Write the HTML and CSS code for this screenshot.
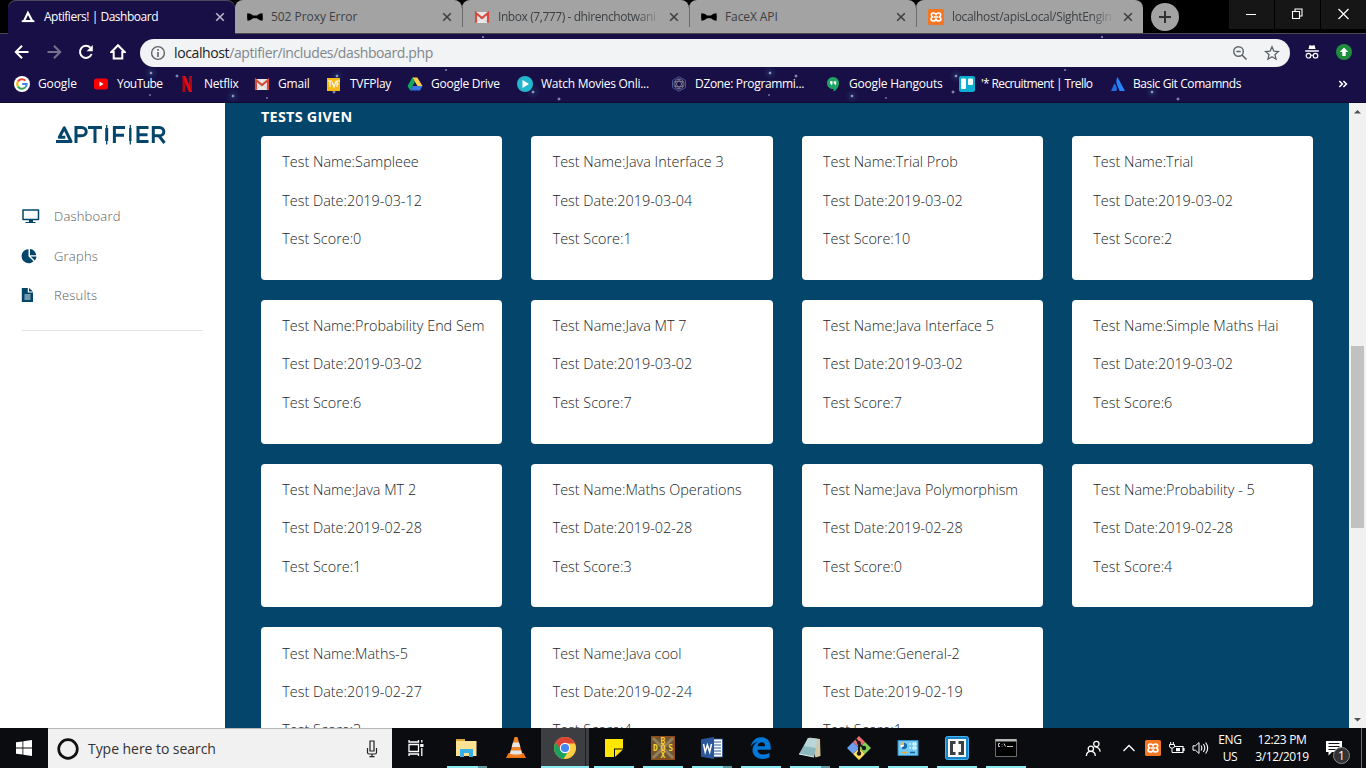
FILE: index.html
```html
<!DOCTYPE html>
<html lang="en">
<head>
<meta charset="utf-8">
<title>Aptifiers! | Dashboard</title>
<link rel="stylesheet" href="styles.css">
</head>
<body>
<svg class="defs" width="0" height="0">
  <defs>
    <symbol id="close" viewBox="0 0 10 10"><path d="M1.2 1.2l7.6 7.6M8.8 1.2L1.2 8.8" stroke="currentColor" stroke-width="1.6" fill="none"/></symbol>
    <symbol id="bow" viewBox="0 0 16 16"><path d="M.3 4.3c2.500 0 4 .8 5.700 2.100h4C11.700 5.100 13.200 4.300 15.500 4.300c.4 2.500.4 5 0 7.500-2.300 0-3.800-1-5.500-2.500H6c-1.700 1.500-3.200 2.500-5.500 2.500C0 9.300 0 6.800.3 4.300z"/></symbol>
    <symbol id="gmail" viewBox="0 0 16 16"><path d="M1.500 3h13v11h-13z" fill="#e8e8e8"/><path d="M3 13l5-5 5 5" fill="none" stroke="#c8c8c8" stroke-width=".7"/><path d="M2 13.800V4l6 5 6-5v9.800" fill="none" stroke="#d54b3d" stroke-width="2.200"/></symbol>
    <symbol id="xampp" viewBox="0 0 16 16"><rect width="16" height="16" rx="1.500" fill="#f37623"/><path d="M8 5.500Q7.300 4 5.200 4 3.200 4 3.400 6q.1 1.700 1.400 2-1.700.4-1.700 2.100 0 1.900 2 1.900 2.900 0 2.900-2.500 0 2.500 2.900 2.500 2 0 2-1.900 0-1.700-1.700-2.100 1.300-.3 1.400-2 .2-2-1.800-2Q8.700 4 8 5.500zM5.500 8h5" fill="none" stroke="#fff" stroke-width="1.700"/></symbol>
  </defs>
</svg>
<header class="chrome">
  <div class="tabs">
    <div class="tab active"><svg class="fav" viewBox="0 0 16 16"><path d="M7.900 3.800L12.300 12H4z" fill="none" stroke="#fff" stroke-width="2.100"/><path d="M1.700 12.200h12.700" stroke="#fff" stroke-width="1.800"/></svg><span class="title t1">Aptifiers! | Dashboard</span><svg class="x"><use href="#close"/></svg></div>
    <div class="tab"><svg class="fav"><use href="#bow"/></svg><span class="title t2">502 Proxy Error</span><svg class="x"><use href="#close"/></svg></div>
    <div class="tab div"><svg class="fav"><use href="#gmail"/></svg><span class="title fade t3">Inbox (7,777) - dhirenchotwani</span><svg class="x"><use href="#close"/></svg></div>
    <div class="tab div"><svg class="fav"><use href="#bow"/></svg><span class="title t4">FaceX API</span><svg class="x"><use href="#close"/></svg></div>
    <div class="tab div"><svg class="fav"><use href="#xampp"/></svg><span class="title fade t5">localhost/apisLocal/SightEngin</span><svg class="x"><use href="#close"/></svg></div>
    <svg class="new" viewBox="0 0 28 28"><circle cx="14" cy="14" r="14" fill="#a3a3a3"/><path d="M14 8v12M8 14h12" stroke="#333" stroke-width="2"/></svg>
    <div class="controls">
      <svg viewBox="0 0 45 29"><path d="M17 14.500h10" stroke="#fff"/></svg>
      <svg viewBox="0 0 45 29"><path d="M17.500 11.500h7v7h-7zM20 11.500v-2.500h7v7h-2.500" fill="none" stroke="#fff" stroke-width="1.100"/></svg>
      <svg viewBox="0 0 45 29"><path d="M17.500 9l10 10M27.500 9l-10 10" stroke="#fff" stroke-width="1.200"/></svg>
    </div>
  </div>
  <div class="toolbar">
    <svg class="nav" viewBox="0 0 16 16"><path d="M14.500 8H2.300M8 1.800L1.800 8 8 14.200" stroke="#fff" stroke-width="2" fill="none"/></svg>
    <svg class="nav" viewBox="0 0 16 16"><path d="M1.500 8h12.200M8 1.800L14.200 8 8 14.200" stroke="#77718f" stroke-width="2" fill="none"/></svg>
    <svg class="nav" viewBox="0 0 16 16"><path d="M13.600 10a6 6 0 1 1-1.200-6.200" stroke="#fff" stroke-width="2" fill="none"/><path d="M14.800 1v6.200H8.600z" fill="#fff"/></svg>
    <svg class="nav" viewBox="0 0 16 16"><path d="M8 1.200L1.500 8h2.200v6.500h8.600V8h2.200z" stroke="#fff" stroke-width="2" fill="none"/></svg>
    <div class="omnibox">
      <svg class="info" viewBox="0 0 16 16"><circle cx="8" cy="8" r="6.400" fill="none" stroke="#5f6368" stroke-width="1.400"/><path d="M8 7v5M8 4v1.700" stroke="#5f6368" stroke-width="1.600"/></svg>
      <span class="url">localhost<span>/aptifier/includes/dashboard.php</span></span>
      <svg class="zoom" viewBox="0 0 16 16"><circle cx="6.500" cy="6.500" r="4.800" fill="none" stroke="#5f6368" stroke-width="1.400"/><path d="M4.300 6.500h4.400M10 10l4.500 4.500" stroke="#5f6368" stroke-width="1.600"/></svg>
      <svg class="star" viewBox="0 0 16 16"><path d="M8 1.800l1.800 4.300 4.700.4L11 9.600l1 4.600-4-2.500-4 2.500 1-4.600L1.500 6.500l4.700-.4z" fill="none" stroke="#5f6368" stroke-width="1.300"/></svg>
    </div>
    <svg class="ext" viewBox="0 0 16 16"><path d="M4.500 5l1-4L8 1.800 10.500 1l1 4zM1.200 6.300h13.600v1.400H1.200z" fill="#fff"/><path d="M7 11.500q1-1 2 0" stroke="#fff" fill="none"/><circle cx="4.500" cy="11.700" r="2.300" stroke="#fff" fill="none" stroke-width="1.200"/><circle cx="11.500" cy="11.700" r="2.300" stroke="#fff" fill="none" stroke-width="1.200"/></svg>
    <svg class="ext upd" viewBox="0 0 16 16"><circle cx="8" cy="8" r="8" fill="#1e8e3e"/><path d="M8 3.500L3.800 8h2.500v4h3.400V8h2.500z" fill="#fff"/></svg>
  </div>
  <nav class="bookmarks">
    <span class="bm b1"><svg viewBox="0 0 16 16"><circle cx="8" cy="8" r="8" fill="#fff"/><g fill="none" stroke-width="2"><path d="M4 5.400A4.800 4.800 0 0 1 11.400 4.600" stroke="#ea4335"/><path d="M4 5.400a4.800 4.800 0 0 0 0 5.200" stroke="#fbbc05"/><path d="M4 10.600a4.800 4.800 0 0 0 7.300.8" stroke="#34a853"/><path d="M11.300 11.400A4.800 4.800 0 0 0 12.700 8H8.200" stroke="#4285f4"/></g></svg><b>Google</b></span>
    <span class="bm b2"><svg viewBox="0 0 16 16"><rect x="1" y="2.500" width="14" height="11" rx="2.500" fill="#f00"/><path d="M6.500 5.500v5l4-2.500z" fill="#fff"/></svg><b>YouTube</b></span>
    <span class="bm b3"><svg viewBox="0 0 16 16"><path d="M2.500 0h3v16h-3zM9 0h3v16H9z" fill="#b1060f"/><path d="M2.500 0h3L12 16H9z" fill="#e50914"/></svg><b>Netflix</b></span>
    <span class="bm b4"><svg><use href="#gmail"/></svg><b>Gmail</b></span>
    <span class="bm b5"><svg viewBox="0 0 16 16"><rect x="1" y="2" width="13" height="13" fill="#f9b916"/><path d="M2 5h4M4 5v6M6 6l2 5 2-6M11 11V5h3M11 8h2" stroke="#fff" fill="none" stroke-width="1.100"/></svg><b>TVFPlay</b></span>
    <span class="bm b6"><svg viewBox="0 0 16 16"><path d="M5.300 1.500h5L15.500 10h-5z" fill="#ffcf48"/><path d="M5.300 1.500L.6 10l2.500 4.500L7.800 6z" fill="#11a861"/><path d="M5.600 10h9.900L13 14.500H3.100z" fill="#3777e3"/></svg><b>Google Drive</b></span>
    <span class="bm b7"><svg viewBox="0 0 16 16"><circle cx="8" cy="8" r="8" fill="#23b7ce"/><path d="M5.500 4v8L12 8z" fill="#fff"/></svg><b>Watch Movies Onli...</b></span>
    <span class="bm b8"><svg viewBox="0 0 16 16"><path d="M8 .7l6.500 3.700v7.200L8 15.300l-6.500-3.700V4.400z" fill="none" stroke="#4b5596"/><g fill="none" stroke="#7d7c8c" stroke-width=".9"><circle cx="8" cy="8" r="5"/><path d="M8 3L4 10.500h8zM8 13L4 5.500h8z"/></g></svg><b>DZone: Programmi...</b></span>
    <span class="bm b9"><svg viewBox="0 0 16 16"><path d="M8 1a6 6 0 0 0-6 6.200c0 3.500 3 5.800 6.500 5.800v2.500C11.500 14 14 10.800 14 7.200A6 6 0 0 0 8 1z" fill="#1fa463"/><path d="M5 5.300h2.500V8L6.300 9.500 6 7.800H5zM8.700 5.300h2.500V8L10 9.500l-.3-1.700h-1z" fill="#fff"/></svg><b>Google Hangouts</b></span>
    <span class="bm b10"><svg viewBox="0 0 16 16"><rect width="16" height="16" rx="2" fill="#09aed0"/><rect x="2" y="2.500" width="5" height="10.500" rx="1" fill="#fff"/><rect x="9" y="2.500" width="5" height="6.500" rx="1" fill="#fff"/></svg><b>'* Recruitment | Trello</b></span>
    <span class="bm b11"><svg viewBox="0 0 16 16"><path d="M4.300 7.500L1 15h5.500c1-2.500.2-5.700-2.200-7.500z" fill="#1f6de0"/><path d="M7.500 1C5.300 5 6.500 8 9.700 15H15z" fill="#2684ff"/></svg><b>Basic Git Comamnds</b></span>
    <svg class="more" viewBox="0 0 10 10"><path d="M1.300 2L4.300 5l-3 3M5.400 2l3 3-3 3" fill="none" stroke="#fff" stroke-width="1.600"/></svg>
  </nav>
</header>

<main class="page">
  <aside class="sidebar">
    <svg class="logo" viewBox="0 0 112 20"><g fill="none" stroke="#04466b" stroke-width="3"><path d="M1 16.500h15L9.300 2.800 4.300 12.300h6" stroke-linejoin="round"/><path d="M21 18V2.500h5.500c6.300 0 6.300 8.300 0 8.300H21M33 2.500h14M40 2.500V18M59.400 18V2.500H70M59.400 10.300H69M93.500 2.500H83v14h10.500M83 9.800h9.500M98.300 18V2.500h6c6 0 6 8.300 0 8.300h-6M104 10.800l5.500 7.200"/></g><g fill="none" stroke="#04466b"><path d="M51.700 3v13" stroke-width="3"/><path d="M75.300 3v13" stroke-width="2.400"/><path d="M51.700 0v3M51.700 16v3.500M75.300 0v3M75.300 16v3.500" stroke-width="1.300"/></g></svg>
    <ul class="menu">
      <li><svg viewBox="0 0 20 16"><path d="M2 2h15.500v9.500H2z" fill="none" stroke="#04466b" stroke-width="1.500" stroke-linejoin="round"/><path d="M8 12h4v2h2.500v1h-10v-1H8z" fill="#04466b"/></svg>Dashboard</li>
      <li><svg viewBox="0 0 20 16"><path d="M7.500 1.200v7l5 5A7 7 0 1 1 7.500 1.200z" fill="#04466b"/><path d="M9 1a6.700 6.700 0 0 1 6.200 6.300H9zM9.700 8.600h5.800a7 7 0 0 1-1.800 4z" fill="#04466b"/></svg>Graphs</li>
      <li><svg viewBox="0 0 20 16"><path d="M.8 1h6v4.500H12V15H.8zM8 1l4 3.500H8z" fill="#04466b"/><path d="M3.500 8h6M3.500 10h6M3.500 12h6" stroke="#fff" stroke-width=".9"/></svg>Results</li>
    </ul>
  </aside>
  <section class="content">
    <h1>TESTS GIVEN</h1>
    <div class="cards">
      <article class="card"><p>Test Name:Sampleee</p><p>Test Date:2019-03-12</p><p>Test Score:0</p></article>
      <article class="card"><p>Test Name:Java Interface 3</p><p>Test Date:2019-03-04</p><p>Test Score:1</p></article>
      <article class="card"><p>Test Name:Trial Prob</p><p>Test Date:2019-03-02</p><p>Test Score:10</p></article>
      <article class="card"><p>Test Name:Trial</p><p>Test Date:2019-03-02</p><p>Test Score:2</p></article>
      <article class="card"><p>Test Name:Probability End Sem</p><p>Test Date:2019-03-02</p><p>Test Score:6</p></article>
      <article class="card"><p>Test Name:Java MT 7</p><p>Test Date:2019-03-02</p><p>Test Score:7</p></article>
      <article class="card"><p>Test Name:Java Interface 5</p><p>Test Date:2019-03-02</p><p>Test Score:7</p></article>
      <article class="card"><p>Test Name:Simple Maths Hai</p><p>Test Date:2019-03-02</p><p>Test Score:6</p></article>
      <article class="card"><p>Test Name:Java MT 2</p><p>Test Date:2019-02-28</p><p>Test Score:1</p></article>
      <article class="card"><p>Test Name:Maths Operations</p><p>Test Date:2019-02-28</p><p>Test Score:3</p></article>
      <article class="card"><p>Test Name:Java Polymorphism</p><p>Test Date:2019-02-28</p><p>Test Score:0</p></article>
      <article class="card"><p>Test Name:Probability - 5</p><p>Test Date:2019-02-28</p><p>Test Score:4</p></article>
      <article class="card"><p>Test Name:Maths-5</p><p>Test Date:2019-02-27</p><p>Test Score:3</p></article>
      <article class="card"><p>Test Name:Java cool</p><p>Test Date:2019-02-24</p><p>Test Score:4</p></article>
      <article class="card"><p>Test Name:General-2</p><p>Test Date:2019-02-19</p><p>Test Score:1</p></article>
    </div>
  </section>
  <div class="scrollbar">
    <svg viewBox="0 0 17 17"><path d="M5 10.500L8.500 7l3.500 3.500z" fill="#505050"/></svg>
    <div class="thumb"></div>
    <svg viewBox="0 0 17 17"><path d="M5 7l3.500 3.500L12 7z" fill="#505050"/></svg>
  </div>
</main>

<footer class="taskbar">
  <div class="start"><svg viewBox="0 0 16 16"><path d="M0 2.300L6.500 1.400v6.200H0zM7.300 1.300L16 0v7.600H7.300zM0 8.400h6.500v6.200L0 13.700zM7.300 8.400H16V16l-8.700-1.300z" fill="#fff"/></svg></div>
  <div class="search">
    <svg class="ring" viewBox="0 0 24 24"><circle cx="12" cy="12" r="9.300" fill="none" stroke="#111" stroke-width="2.700"/></svg>
    <span>Type here to search</span>
    <svg class="mic" viewBox="0 0 12 18"><path d="M4 1h4v10H4zM1.500 8v4.500q0 1.500 1.500 1.500h6q1.500 0 1.500-1.500V8M6 14v3M3.500 16.700h5" fill="none" stroke="#222" stroke-width="1.200"/></svg>
  </div>
  <div class="view"><svg viewBox="0 0 18 18"><path d="M2 5.500h9.500v7H2zM2 1v2h9.500V1M2 17v-2h9.500v2M14.800 1v2.500M14.800 9v8" fill="none" stroke="#fff" stroke-width="1.300"/><path d="M13.200 5h3.300v3h-3.300z" fill="#fff"/></svg></div>
  <div class="apps">
    <div class="app on stack"><svg viewBox="0 0 24 24"><path d="M1 3h8l1 2h11.500v15H1z" fill="#fde293"/><path d="M1 3h9v2H1z" fill="#d9a937"/><path d="M5 21v-8h13v8h-4v-4H9v4z" fill="#39b0e5"/></svg></div>
    <div class="app"><svg viewBox="0 0 24 24"><path d="M4.500 17h15l2.500 5H2z" fill="#ee7313"/><path d="M10.500 1h3l5 18c-3 2-9 2-13 0z" fill="#f18328"/><path d="M9 6.500h6l1.400 4.500H7.700zM6.800 14.500h10.500l.7 3c-3 1.300-9 1.300-12 0z" fill="#e6e6e6"/></svg></div>
    <div class="app on current"><svg viewBox="0 0 24 24"><circle cx="12" cy="12" r="11" fill="#ffcd40"/><path d="M2.500 6.500a11 11 0 0 1 19.500 1H12l-5 7z" fill="#dc4437"/><path d="M2.500 6.500a11 11 0 0 0 8 16.400l5-8.200-7.500 0z" fill="#1aa15f"/><circle cx="12" cy="12" r="5.200" fill="#fff"/><circle cx="12" cy="12" r="4.100" fill="#4587f3"/></svg></div>
    <div class="app on"><svg viewBox="0 0 24 24"><path d="M3 3h18v9.500h-9V21H3z" fill="#ffe500"/><path d="M13 21v-7.500h8z" fill="#ffe500"/></svg></div>
    <div class="app on"><svg viewBox="0 0 24 24"><path d="M.7.700h22.600v22.600H.7z" fill="#6e5636" stroke="#8f4b18" stroke-width="1.400"/><path d="M2 2l20 20M22 2L2 22" stroke="#94815c" stroke-width="3"/><g class="dos"><text x="12" y="7.500">B</text><text x="12" y="15" textLength="20">DOS</text><text x="12" y="22.300">X</text></g></svg></div>
    <div class="app on stack"><svg viewBox="0 0 24 24"><path d="M12 3h10.500v18H12z" fill="#fff" stroke="#2b579a" stroke-width=".8"/><path d="M14 6h7M14 9h7M14 12h7M14 15h7M14 18h7" stroke="#2b579a"/><path d="M1 3.200L14 1v22L1 20.800z" fill="#2b579a"/><path d="M3.500 8l1.700 8L7.400 9l2.300 7L11.500 8" fill="none" stroke="#fff" stroke-width="1.500"/></svg></div>
    <div class="app on"><svg viewBox="0 0 24 24"><path d="M1.700 10.700C3 4.500 7 1.200 12.200 1.200c6.300 0 9.500 4.800 9.500 10v2.600H8.500c.3 5.500 7.500 6 12 3v4.400c-8.500 4.300-17 .5-17-6.900 0-4 2-6.800 5.500-8.300-3 .1-5.500 2-7.300 4.700zM8.600 10.200h7.500c0-5.300-7-5-7.500 0z" fill="#0078d7"/></svg></div>
    <div class="app on stack"><svg viewBox="0 0 24 24"><path d="M11 1.500L22 3l.5 17-5 1.500z" fill="#d3c6a3"/><path d="M10 2l10 1-4 18-15-3z" fill="#8db9be"/><path d="M10 2l10 1-2 9-12-2z" fill="#bbd6d8"/><path d="M1 18l15 3" stroke="#e6f2f2"/></svg></div>
    <div class="app on"><svg viewBox="0 0 24 24"><path d="M12 0l6 6-6 6-6-6z" fill="#ef6c70"/><path d="M18 6l6 6-6 6-6-6z" fill="#85cf56"/><path d="M12 12l6 6-6 6-6-6z" fill="#ffe05e"/><path d="M6 6l6 6-6 6-6-6z" fill="#6e9fef"/><path d="M8 2l4 5v11M12 8l5 4" fill="none" stroke="#16191e" stroke-width="2"/><circle cx="12" cy="7" r="2" fill="#16191e"/><circle cx="12" cy="17.500" r="2.200" fill="#16191e"/><circle cx="17" cy="12" r="2.200" fill="#16191e"/></svg></div>
    <div class="app on"><svg viewBox="0 0 24 24"><path d="M2 4.500h20v15H2z" fill="#70c9f2" stroke="#318dc4"/><circle cx="8" cy="10" r="3.500" fill="#fff"/><path d="M8 10V6.500A3.500 3.500 0 1 1 5 12z" fill="#176eb5"/><path d="M8 9V6a3.500 3.500 0 0 0-3.500 3z" fill="#f6b338"/><path d="M13 8h2M13 12h2M17 7h3v2h-3zM17 11h3v2h-3z" fill="none" stroke="#fff"/><path d="M5 16.500h7" stroke="#f0a83c" stroke-width="1.500"/><path d="M14 16.500h5" stroke="#16609b" stroke-width="1.500"/></svg></div>
    <div class="app on"><svg viewBox="0 0 24 24"><rect x=".5" y=".5" width="23" height="23" rx="2" fill="#1685c7" stroke="#46b2ef"/><path d="M3 3h18v18H3z" fill="#f8f8f8"/><path d="M10.500 6.500h-4v11h4M13.500 6.500h4v11h-4" fill="none" stroke="#3c3f41" stroke-width="3"/></svg></div>
    <div class="app on"><svg viewBox="0 0 24 24"><path d="M1.500 3.500h21v17h-21z" fill="#000" stroke="#888" stroke-width=".8"/><path d="M1.500 3h21v2.500h-21z" fill="#b9b9b9"/><path d="M6 7.500H4.500v3H6M8 8v.5M8 10v.5M10 7.500l1.500 3M13 10.500h6" fill="none" stroke="#ddd" stroke-width=".9"/></svg></div>
  </div>
  <div class="tray">
    <svg class="people" viewBox="0 0 16 16"><g fill="none" stroke="#fff" stroke-width="1.200"><circle cx="10.700" cy="3.700" r="2.500"/><path d="M8.800 6.300q5 .5 5.500 4.700"/><circle cx="5.500" cy="8.300" r="2.500"/><path d="M1.300 15q.2-4.200 4.200-4.200t4.200 4.200"/></g></svg>
    <svg class="up" viewBox="0 0 16 16"><path d="M2.500 11L8 5.500l5.500 5.500" fill="none" stroke="#fff" stroke-width="1.300"/></svg>
    <svg class="xa"><use href="#xampp"/></svg>
    <svg class="bat" viewBox="0 0 16 16"><path d="M5.500 6.500H14v6H5.500M15 8v3" fill="none" stroke="#fff" stroke-width="1.200"/><path d="M7 8h4v3.200H7z" fill="#fff"/><path d="M.5 4.500h5V6q0 2-2 2h-1q-2 0-2-2zM1.700 2v2.500M4.300 2v2.500M3 8v4.500h3" stroke="#fff" fill="none"/></svg>
    <svg class="vol" viewBox="0 0 17 16"><path d="M1 5.800h2.500L7 2.500v11l-3.500-3.300H1z" fill="none" stroke="#fff"/><path d="M9 5.500q1.700 2.500 0 5M11.300 4q3 4 0 8M13.600 2.500q4.200 5.500 0 11" fill="none" stroke="#fff" stroke-width="1.100"/></svg>
    <div class="lang"><span>ENG</span><span>US</span></div>
    <div class="clock"><span>12:23 PM</span><span>3/12/2019</span></div>
    <div class="notice"><svg viewBox="0 0 18 16"><path d="M1 1h16v11H7l-3.500 3.500V12H1z" fill="#fff"/><path d="M3.500 3.500h11M3.500 6.500h11M3.500 9.500h7" stroke="#111" stroke-width="1"/></svg><i>1</i></div>
    <div class="peek"></div>
  </div>
</footer>
</body>
</html>
```
FILE: styles.css
```css
* { box-sizing: border-box; }
html, body { margin: 0; height: 768px; overflow: hidden; }
body {
  display: flex;
  flex-direction: column;
  width: 1366px;
  font-family: "Open Sans", "Noto Sans", sans-serif;
}
svg { display: block; flex: none; }
.defs { position: absolute; }

/* browser frame */
.chrome {
  height: 103px;
  flex: none;
  background-color: #180f47;
  background-image:
    radial-gradient(circle at 151px 73px, #9da1c8 .6px, #1c2357 1.800px, transparent 7px),
    radial-gradient(circle at 177px 76px, #8f93ba .5px, transparent 2px),
    radial-gradient(circle at 233px 96px, #9da1c8 .6px, #1c2357 1.800px, transparent 7px),
    radial-gradient(circle at 150px 95px, #6d709c .5px, transparent 1.500px),
    radial-gradient(circle at 267px 98px, #6d709c .5px, transparent 1.500px),
    radial-gradient(circle at 337px 76px, #9da1c8 .6px, #1c2357 1.800px, transparent 7px),
    radial-gradient(circle at 334px 92px, #8f93ba .5px, transparent 2px),
    radial-gradient(circle at 446px 70px, #7d80a9 .5px, transparent 1.500px),
    radial-gradient(circle at 533px 92px, #9da1c8 .6px, #1c2357 1.800px, transparent 7px),
    radial-gradient(circle at 559px 99px, #8f93ba .5px, transparent 2px),
    radial-gradient(circle at 483px 37px, #8f93ba .5px, transparent 1.500px);
  background-size: 619px 103px;
  border-bottom: 1px solid #100b2d;
}
.tabs {
  display: flex;
  height: 34px;
  padding-left: 8px;
  background: linear-gradient(#000 33px, #4b4b4b 33px);
}
.tab {
  display: flex;
  align-items: center;
  width: 227px;
  height: 33px;
  padding: 0 10px 0 12px;
  border-radius: 8px 8px 0 0;
  background: #a3a3a3;
  color: #3c4043;
}
.tab.div { background: linear-gradient(#6b6b6b, #6b6b6b) 0 7px / 1px 20px no-repeat #a3a3a3; }
.tab.active {
  height: 34px;
  background: #180f47;
  color: #fff;
  box-shadow: inset 0 1px #4a4a58;
}
.tab.active .x { color: #b8b5c8; }
.tab .fav { width: 16px; height: 16px; fill: #000; margin-right: 8px; }
.title {
  flex: 1;
  min-width: 0;
  white-space: nowrap;
  font-size: 12px;
  line-height: 18px;
}
.fade { -webkit-mask-image: linear-gradient(90deg, #000 85%, transparent); mask-image: linear-gradient(90deg, #000 85%, transparent); }
.t1 { letter-spacing: -.48px; }
.t2 { letter-spacing: -.05px; }
.t3 { letter-spacing: -.42px; }
.t4 { letter-spacing: -.1px; }
.t5 { letter-spacing: -.33px; }
.x { width: 10px; height: 10px; margin-left: 8px; }
.new { width: 28px; height: 28px; margin: 3px 50px 0 8px; }
.controls { display: flex; gap: 1px; }
.controls svg { width: 45px; height: 29px; background: #161616; }

.toolbar { display: flex; align-items: center; height: 36px; padding: 0 0 0 14px; }
.nav { width: 16px; height: 16px; margin-right: 16px; }
.omnibox {
  display: flex;
  align-items: center;
  width: 1150px;
  height: 28px;
  margin-top: 1px;
  margin-left: -2px;
  padding: 0 10px;
  background: #f1f3f4;
  border-radius: 14px;
}
.info { width: 16px; height: 16px; margin-right: 8px; }
.url { flex: 1; font-size: 14px; line-height: 18px; letter-spacing: -.39px; color: #202124; }
.url span { color: #80868b; }
.zoom { width: 16px; height: 16px; margin-right: 16px; }
.star { width: 16px; height: 16px; }
.ext { width: 16px; height: 16px; margin-left: 14px; }
.upd { margin-left: 16px; }

.bookmarks {
  display: grid;
  grid-template-columns: 79px 87px 74px 72px 81px 110px 154px 154px 134px 151px 228px auto;
  align-items: center;
  height: 28px;
  padding-left: 14px;
}
.bm { display: flex; align-items: center; white-space: nowrap; color: #fff; font-size: 12px; letter-spacing: -.26px; }
.bm svg { width: 16px; height: 16px; margin-right: 8px; }
.bm b { font-weight: 400; margin-top: -2px; }
.b1 { letter-spacing: -.1px; }
.b2 { letter-spacing: -.55px; }
.b4 { letter-spacing: -.2px; }
.b8 { letter-spacing: -.33px; }
.b9 { letter-spacing: -.2px; }
.b10 { letter-spacing: -.62px; }
.b10 svg { margin-right: 6px; }
.b11 { letter-spacing: -.4px; }
.b11 svg { margin-right: 7px; }
.more { width: 10px; height: 10px; }

/* page */
.page { display: flex; flex: none; height: 625px; overflow: hidden; background: #fff; }
.sidebar { width: 225px; flex: none; padding: 22px 22px 0; background: #fff; }
.logo { width: 112px; height: 20px; margin-left: 33px; }
.menu {
  margin: 51px 0 0;
  padding: 0 0 15px;
  list-style: none;
  border-bottom: 1px solid #e5e5e5;
  width: 181px;
}
.menu li {
  display: flex;
  align-items: center;
  height: 39.700px;
  color: #5c5c5c;
  font-size: 13px;
  letter-spacing: .2px;
  font-weight: 300;
}
.menu svg { width: 20px; height: 16px; margin: 0 13px 0 -1px; }
.content { flex: 1; padding: 4px 36px 0; background: #04466b; }
h1 { margin: 0; height: 29px; color: #fff; font-size: 14.400px; letter-spacing: .25px; line-height: 20px; font-weight: 700; }
.cards { display: grid; grid-template-columns: repeat(4, 241.300px); column-gap: 29.050px; row-gap: 20px; }
.card { height: 143.800px; padding: 14.300px 21.300px 0; background: #fff; border-radius: 4px; }
.card p {
  margin: 0 0 14.400px;
  font-size: 14.400px;
  line-height: 24px;
  font-weight: 300;
  color: #212529;
  white-space: nowrap;
}
.scrollbar { display: flex; flex-direction: column; width: 17px; background: #f1f1f1; }
.scrollbar svg { width: 17px; height: 17px; }
.thumb { width: 13px; height: 182px; margin: 226px 2px auto; background: #c1c1c1; }

/* taskbar */
.taskbar { display: flex; height: 40px; flex: none; background: #0b0c10; color: #fff; }
.start { display: grid; place-items: center; width: 48px; }
.start svg { width: 16px; height: 16px; }
.search {
  display: flex;
  align-items: center;
  width: 344px;
  padding: 0 14px 0 8px;
  background: #f1f1f1;
  border-top: 1px solid #b7b7b7;
  color: #333;
  font-size: 14px;
  letter-spacing: -.05px;
}
.search span { flex: 1; margin-left: 8px; }
.ring { width: 24px; height: 24px; }
.mic { width: 12px; height: 18px; }
.view { display: grid; place-items: center; width: 50px; padding-right: 2px; }
.view svg { width: 18px; height: 18px; }
.apps { display: grid; grid-template-columns: repeat(12, 49px); margin-right: 55px; }
.app { display: grid; place-items: center; padding: 0 0 1px; }
.app svg { width: 24px; height: 24px; }
.on { background: linear-gradient(#8aeaf0, #8aeaf0) 5px 38px / 40px 2px no-repeat; }
.stack { background: linear-gradient(90deg, #8aeaf0 31px, #5d9ba0 31px) 5px 38px / 40px 2px no-repeat; }
.current { background: linear-gradient(#8aeaf0, #8aeaf0) 1px 38px / 48px 2px no-repeat, linear-gradient(90deg, transparent 1px, #3d3e41 1px, #3d3e41 45px, #1d1e21 45px, #1d1e21 46px, #3d3e41 46px); }
.dos { fill: #f2d72c; font-size: 8px; font-weight: 700; font-family: "DejaVu Sans Mono", monospace; text-anchor: middle; }
.tray { display: flex; align-items: center; flex: 1; font-size: 12px; }
.tray svg { width: 16px; height: 16px; }
.tray .people { width: 17px; height: 17px; }
.tray .up { margin-left: 19px; }
.tray .xa { margin-left: 8px; }
.tray .bat { margin-left: 8px; }
.tray .vol { width: 17px; margin-left: 7px; }
.lang, .clock { display: flex; flex-direction: column; align-items: center; line-height: 17.500px; letter-spacing: -.35px; }
.lang { width: 24px; margin-left: 9px; }
.clock { width: 54px; margin-left: 13px; white-space: nowrap; }
.notice { position: relative; margin-left: 16px; }
.tray .notice svg { width: 18px; height: 16px; }
.notice i {
  position: absolute;
  left: 8px;
  top: 7px;
  width: 17px;
  height: 17px;
  border: 1px solid #8c8c8c;
  border-radius: 50%;
  background: #333;
  font-style: normal;
  line-height: 15px;
  text-align: center;
}
.peek { width: 1px; height: 40px; margin-left: auto; margin-right: 4px; background: #6b6b6b; }
```
